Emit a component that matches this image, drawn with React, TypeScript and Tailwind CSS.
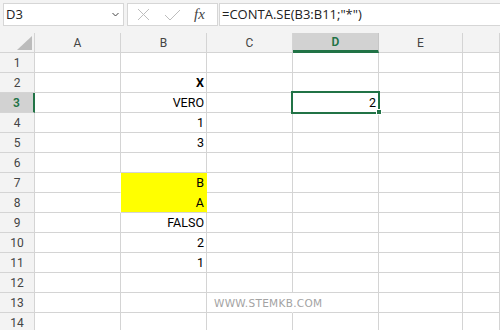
import React from 'react'

type Cell = { text?: string; bold?: boolean; fill?: string }

const colWidths = ['w-[86px]', 'w-[86px]', 'w-[86px]', 'w-[86px]', 'w-[84px]', 'flex-1']
const colNames = ['A', 'B', 'C', 'D', 'E', '']

// row number -> column index -> cell
const data: Record<number, Record<number, Cell>> = {
  2: { 1: { text: 'X', bold: true } },
  3: { 1: { text: 'VERO' }, 3: { text: '2' } },
  4: { 1: { text: '1' } },
  5: { 1: { text: '3' } },
  7: { 1: { text: 'B', fill: 'yellow' } },
  8: { 1: { text: 'A', fill: 'yellow' } },
  9: { 1: { text: 'FALSO' } },
  10: { 1: { text: '2' } },
  11: { 1: { text: '1' } },
}

function FormulaBar() {
  return (
    <div className="flex h-[33px] items-start gap-0 bg-[#f3f3f3] pt-[3px] pl-[3px]">
      <div className="flex h-[23px] w-[121px] items-center justify-between border border-[#d6d6d6] bg-white pl-[2px] pr-[4px]">
        <span className="text-[13px] text-[#222]" style={{ fontFamily: '"Open Sans", sans-serif' }}>D3</span>
        <svg width="7" height="5" viewBox="0 0 7 5">
          <path d="M0.5 1 L3.5 4 L6.5 1" fill="none" stroke="#444" strokeWidth="1" />
        </svg>
      </div>
      <div className="ml-[3px] flex h-[23px] w-[91px] items-center border border-[#d6d6d6] bg-white">
        <svg className="ml-[9px]" width="13" height="13" viewBox="0 0 13 13">
          <path d="M1 1 L12 12 M12 1 L1 12" stroke="#bdbdbd" strokeWidth="1" />
        </svg>
        <svg className="ml-[14px]" width="17" height="12" viewBox="0 0 17 12">
          <path d="M1 6 L6 11 L16 1" fill="none" stroke="#bdbdbd" strokeWidth="1" />
        </svg>
        <span
          className="ml-[13px] text-[15px] italic text-[#444]"
          style={{ fontFamily: '"Liberation Serif", serif' }}
        >
          fx
        </span>
      </div>
      <div className="ml-[1px] flex h-[23px] flex-1 items-center border border-r-0 border-[#d6d6d6] bg-white pl-[2px]">
        <span className="text-[13px] text-[#222]" style={{ fontFamily: '"Open Sans", sans-serif' }}>
          =CONTA.SE(B3:B11;"*")
        </span>
      </div>
    </div>
  )
}

function HeaderRow() {
  return (
    <div className="flex h-[20px]">
      <div className="relative h-[20px] w-[35px] border-r border-b border-[#d4d4d4] bg-[#f3f3f3]">
        <svg className="absolute left-[17px] top-[3px]" width="15" height="14" viewBox="0 0 15 14">
          <path d="M15 0 L15 14 L0 14 Z" fill="#bcbcbc" />
        </svg>
      </div>
      {colNames.map((c, i) => {
        const sel = c === 'D'
        return (
          <div
            key={i}
            className={`flex h-[20px] items-center justify-center ${colWidths[i]} ${
              sel
                ? 'border-r border-r-[#c6c6c6] border-b-[3px] border-b-[#217346] bg-[#d2d2d2] font-semibold text-[#217346]'
                : 'border-r border-b border-[#d4d4d4] bg-[#f3f3f3] text-[#444]'
            }`}
          >
            <span className="text-[12px]">{c}</span>
          </div>
        )
      })}
    </div>
  )
}

function Row({ n }: { n: number }) {
  const sel = n === 3
  const row = data[n] || {}
  return (
    <div className="flex h-[20px]">
      <div
        className={`flex h-[20px] w-[35px] items-center justify-center border-b border-[#d4d4d4] ${
          sel
            ? 'border-r-[2px] border-r-[#217346] bg-[#d2d2d2] font-semibold text-[#217346]'
            : 'border-r border-[#d4d4d4] bg-[#f3f3f3] text-[#444]'
        }`}
      >
        <span className="text-[12px]">{n}</span>
      </div>
      {colNames.map((_, i) => {
        const cell = row[i]
        const yellow = cell?.fill === 'yellow'
        const nextYellow = data[n]?.[i + 1]?.fill === 'yellow'
        const belowYellow = data[n + 1]?.[i]?.fill === 'yellow'
        const isD3 = sel && i === 3
        const isC13 = n === 13 && i === 2
        return (
          <div
            key={i}
            className={`relative flex h-[20px] items-center justify-end pr-[2px] pt-[1px] ${colWidths[i]} ${
              yellow ? 'bg-[#ffff00]' : 'bg-white'
            } ${
              yellow || nextYellow || isC13 ? 'border-r border-r-transparent' : 'border-r border-r-[#d4d4d4]'
            } ${yellow && belowYellow ? 'border-b border-b-[#ffff00]' : 'border-b border-b-[#d4d4d4]'}`}
          >
            {cell?.text && (
              <span className={`text-[12.5px] text-black ${cell.bold ? 'font-bold' : ''}`}>{cell.text}</span>
            )}
            {isC13 && (
              <span
                className="absolute left-[7px] top-[3px] z-10 whitespace-nowrap text-[10.5px] tracking-[0.3px] text-[#a3a3a3]"
                style={{ fontFamily: '"DejaVu Sans", sans-serif' }}
              >
                WWW.STEMKB.COM
              </span>
            )}
            {isD3 && (
              <>
                <div className="pointer-events-none absolute -left-[2px] -top-[2px] z-10 h-[23px] w-[89px] border-2 border-[#217346]" />
                <div className="absolute left-[83px] top-[16px] z-20 h-[6px] w-[6px] border border-white bg-[#217346]" />
              </>
            )}
          </div>
        )
      })}
    </div>
  )
}

export default function App() {
  const rows = Array.from({ length: 14 }, (_, i) => i + 1)
  return (
    <div
      className="h-[330px] w-[500px] overflow-hidden bg-white"
      style={{ fontFamily: 'Roboto, "Open Sans", sans-serif' }}
    >
      <FormulaBar />
      <HeaderRow />
      {rows.map((n) => (
        <Row key={n} n={n} />
      ))}
    </div>
  )
}
